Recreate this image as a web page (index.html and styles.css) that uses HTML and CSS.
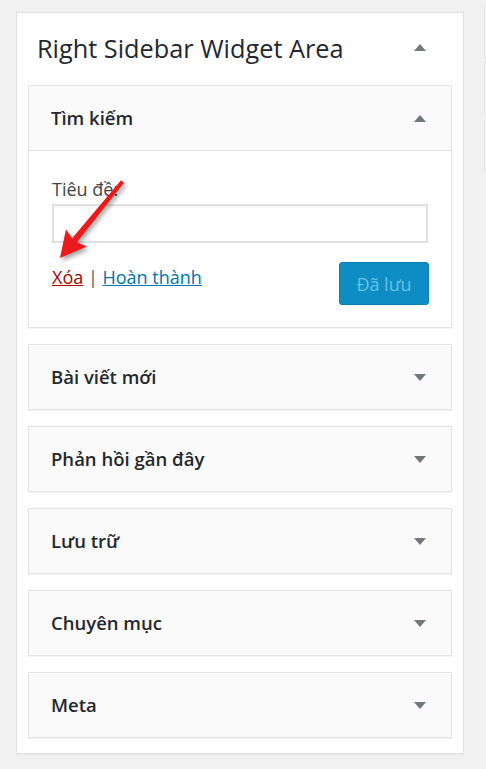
FILE: index.html
```html
<!DOCTYPE html>
<html lang="vi">
<head>
<meta charset="utf-8">
<title>Right Sidebar Widget Area</title>
<link rel="stylesheet" href="styles.css">
</head>
<body>
<div class="page">
  <div class="sidebar">
    <div class="sidebar-head">
      <h2 class="sidebar-title">Right Sidebar Widget Area</h2>
      <svg class="caret caret-head" viewBox="0 0 12 7" width="12" height="7"><path d="M0 7 L6 0 L12 7Z"/></svg>
    </div>
    <div class="widgets">
      <div class="widget">
        <div class="widget-top">
          <h3 class="widget-title">Tìm kiếm</h3>
          <svg class="caret" viewBox="0 0 12 7" width="12" height="7"><path d="M0 7 L6 0 L12 7Z"/></svg>
        </div>
        <div class="widget-inside">
          <label class="field-label" for="title">Tiêu đề:</label>
          <input class="field-input" id="title" type="text">
          <div class="actions">
            <div class="links"><a class="link-delete" href="#">Xóa</a> | <a class="link-done" href="#">Hoàn thành</a></div>
            <button class="save-btn" type="button">Đã lưu</button>
          </div>
          <svg class="annot-arrow" viewBox="40 170 100 100" width="100" height="100">
            <polygon points="75.8,243.8 70.9,239.7 121,180.2 124.1,182.8" fill="#ec1b1b"/>
            <polygon points="60,258 66,229.2 73.9,241 87,246.6" fill="#ec1b1b"/>
          </svg>
        </div>
      </div>
      <div class="widget">
        <div class="widget-top">
          <h3 class="widget-title">Bài viết mới</h3>
          <svg class="caret" viewBox="0 0 12 7" width="12" height="7"><path d="M0 0 L12 0 L6 7Z"/></svg>
        </div>
      </div>
      <div class="widget">
        <div class="widget-top">
          <h3 class="widget-title">Phản hồi gần đây</h3>
          <svg class="caret" viewBox="0 0 12 7" width="12" height="7"><path d="M0 0 L12 0 L6 7Z"/></svg>
        </div>
      </div>
      <div class="widget">
        <div class="widget-top">
          <h3 class="widget-title">Lưu trữ</h3>
          <svg class="caret" viewBox="0 0 12 7" width="12" height="7"><path d="M0 0 L12 0 L6 7Z"/></svg>
        </div>
      </div>
      <div class="widget">
        <div class="widget-top">
          <h3 class="widget-title">Chuyên mục</h3>
          <svg class="caret" viewBox="0 0 12 7" width="12" height="7"><path d="M0 0 L12 0 L6 7Z"/></svg>
        </div>
      </div>
      <div class="widget">
        <div class="widget-top">
          <h3 class="widget-title">Meta</h3>
          <svg class="caret" viewBox="0 0 12 7" width="12" height="7"><path d="M0 0 L12 0 L6 7Z"/></svg>
        </div>
      </div>
    </div>
  </div>
  <div class="side-col">
    <div class="side-box"></div>
    <div class="side-box"></div>
    <div class="side-box side-box-gap"></div>
  </div>
</div>
</body>
</html>
```

FILE: styles.css
```css
* { box-sizing: border-box; }

html, body {
  margin: 0;
  padding: 0;
  background: #f1f1f1;
}

body {
  font-family: "Open Sans", "Noto Sans", "Liberation Sans", sans-serif;
  color: #23282d;
  width: 486px;
  height: 769px;
  overflow: hidden;
}

.page {
  display: flex;
  align-items: flex-start;
  padding-left: 16px;
  gap: 20px;
}

.sidebar {
  flex: none;
  width: 448px;
  margin-top: 12px;
  background: #fff;
  border: 1px solid #e2e2e2;
  box-shadow: 0 1px 1px rgba(0, 0, 0, 0.04);
  padding: 0 11px 15px;
}

.sidebar-head {
  height: 72px;
  display: flex;
  align-items: center;
  justify-content: space-between;
  padding: 0 26px 0 9px;
}

.sidebar-title {
  margin: 0;
  font-size: 25.3px;
  font-weight: 400;
  line-height: 1;
  color: #23282d;
}

.caret {
  display: block;
  flex: none;
  fill: #72777c;
}

.caret-head {
  margin-bottom: 4px;
}

.widgets {
  display: flex;
  flex-direction: column;
  gap: 16px;
}

.widget {
  background: #fff;
  border: 1px solid #e3e3e3;
  box-shadow: 0 1px 1px rgba(0, 0, 0, 0.04);
}

.widget-top {
  height: 64px;
  background: #fafafa;
  display: flex;
  align-items: center;
  justify-content: space-between;
  padding: 0 25px 0 22px;
}

.widget-title {
  margin: 0;
  font-size: 18.5px;
  font-weight: 600;
  line-height: 1;
  color: #23282d;
}

.widget-inside {
  position: relative;
  border-top: 1px solid #e3e3e3;
  padding: 26px 23px 22px;
}

.field-label {
  display: block;
  font-size: 18px;
  line-height: 24px;
  color: #444;
}

.field-input {
  display: block;
  width: 100%;
  height: 39px;
  margin: 3px 0 0;
  border: 2px solid #e0e0e0;
  background: #fff;
  box-shadow: inset 0 1px 2px rgba(0, 0, 0, 0.06);
  font: 18px "Open Sans", sans-serif;
}

.actions {
  display: flex;
  justify-content: space-between;
  align-items: flex-start;
  margin-top: 19px;
}

.links {
  font-size: 18px;
  line-height: 24px;
  padding-top: 3px;
  color: #555;
}

.link-delete {
  color: #a00;
  text-decoration: underline;
}

.link-done {
  color: #0073aa;
  text-decoration: underline;
}

.save-btn {
  width: 90px;
  height: 43px;
  margin-right: -1px;
  border: 1px solid #0b7fb3;
  border-radius: 3px;
  background: #0e8dc5;
  color: #66c2e5;
  font: 18px "Open Sans", "Noto Sans", sans-serif;
  padding: 0;
}

.annot-arrow {
  position: absolute;
  left: 11px;
  top: 19px;
  overflow: visible;
  filter: drop-shadow(2px 3px 2px rgba(0, 0, 0, 0.35));
}

.side-col {
  flex: none;
  width: 2px;
  display: flex;
  flex-direction: column;
  gap: 2px;
  margin-top: 7px;
}

.side-box {
  height: 52px;
  width: 2px;
  background: #efefef;
  border-left: 1px solid #e6e6e6;
}

.side-box-gap {
  margin-top: 5px;
}
```
